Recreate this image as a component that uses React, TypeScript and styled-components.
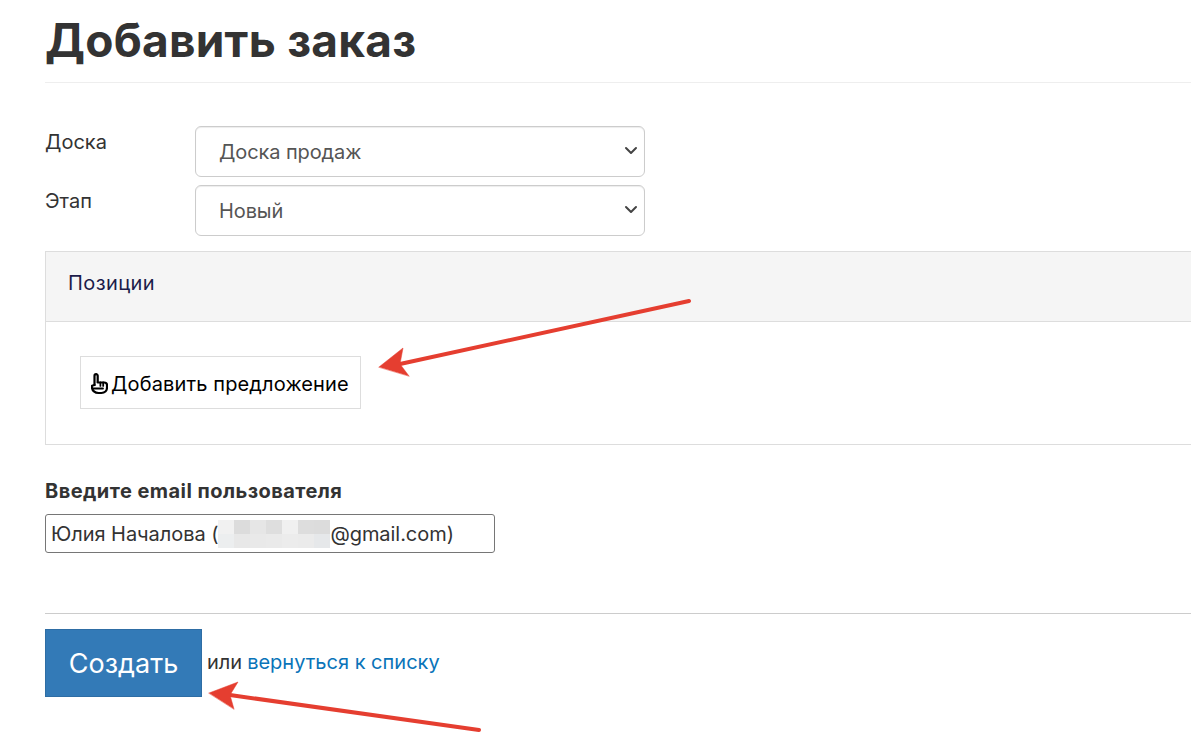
import React from "react";
import styled, { createGlobalStyle } from "styled-components";

const Global = createGlobalStyle`
  html, body { margin: 0; padding: 0; background: #fff; overflow: hidden; }
  body { font-family: Inter, "Noto Sans", sans-serif; color: #333; }
`;
const Page = styled.div`
  position: relative;
  width: 1191px;
  height: 748px;
  overflow: hidden;
  padding-left: 45px;
  box-sizing: border-box;
`;
const Content = styled.div`
  width: 1200px;
`;
const Header = styled.div`
  height: 82px;
  border-bottom: 1px solid #eee;
  box-sizing: content-box;
`;
const Title = styled.h1`
  margin: 0;
  font-size: 46px;
  line-height: 80px;
  font-weight: 700;
  color: #333;
  letter-spacing: 0.25px;
`;
const Form = styled.div`
  padding-top: 43px;
  display: flex;
  flex-direction: column;
  gap: 8px;
`;
const Row = styled.div`
  display: flex;
  align-items: flex-start;
`;
const RowLabel = styled.label`
  width: 150px;
  font-size: 20px;
  line-height: 33px;
  color: #333;
`;
const SelectWrap = styled.div`
  position: relative;
  width: 450px;
  height: 51px;
`;
const Select = styled.select`
  display: block;
  width: 100%;
  height: 100%;
  padding: 0 23px;
  appearance: none;
  font: 400 20px Inter, sans-serif;
  letter-spacing: -0.1px;
  color: #555;
  background: #fff;
  border: 1px solid #ccc;
  border-radius: 6px;
  box-shadow: inset 0 1px 1px rgba(0, 0, 0, 0.075);
`;
const Chevron = styled.svg`
  position: absolute;
  right: 7px;
  top: 20px;
  pointer-events: none;
`;
const Panel = styled.section`
  margin-top: 15px;
  border: 1px solid #ddd;
  height: 194px;
  box-sizing: border-box;
`;
const PanelHeading = styled.div`
  height: 70px;
  padding: 0 22px 8px;
  box-sizing: border-box;
  display: flex;
  align-items: center;
  background: #f5f5f5;
  border-bottom: 1px solid #ddd;
  font-size: 20px;
  letter-spacing: 0.4px;
  color: #1c1c4a;
`;
const PanelBody = styled.div`
  padding: 34px 34px;
`;
const OfferButton = styled.button`
  display: flex;
  align-items: center;
  gap: 3px;
  height: 53px;
  width: 281px;
  padding: 2px 0 0 10px;
  background: #fff;
  border: 1px solid #ddd;
  font: 400 20px Inter, sans-serif;
  letter-spacing: 0.14px;
  color: #000;
`;
const EmailLabel = styled.label`
  display: block;
  margin-top: 34px;
  font-size: 20px;
  line-height: 24px;
  font-weight: 700;
  letter-spacing: 0.45px;
  color: #333;
`;
const EmailInput = styled.div`
  margin-top: 11px;
  width: 450px;
  height: 39px;
  box-sizing: border-box;
  padding-left: 5px;
  display: flex;
  align-items: center;
  border: 1px solid #767676;
  border-radius: 3px;
  font-size: 20px;
  letter-spacing: -0.05px;
  color: #333;
  white-space: nowrap;
`;
const Redacted = styled.span`
  display: grid;
  grid-template-columns: repeat(7, 16px);
  grid-template-rows: repeat(2, 14px);
  flex: none;
`;
const Pixel = styled.i<{ $c: string }>`
  background: ${(p) => p.$c};
`;
const Divider = styled.hr`
  margin: 60px 0 15px;
  border: 0;
  border-top: 1px solid #ccc;
`;
const Actions = styled.div`
  display: flex;
  align-items: center;
  font-size: 20px;
  color: #333;
`;
const Submit = styled.button`
  width: 157px;
  height: 68px;
  padding: 0;
  margin-right: 5px;
  background: #337ab7;
  border: 1px solid #2e6da4;
  color: #fff;
  font: 400 27px Inter, sans-serif;
`;
const Aside = styled.span`
  padding-bottom: 2px;
`;
const BackLink = styled.a`
  margin-left: 5px;
  color: #0a74b9;
  text-decoration: none;
`;
const Arrows = styled.svg`
  position: absolute;
  left: 0;
  top: 0;
  pointer-events: none;
`;

const pixels = [
  "#f1f1f1", "#dcdcdc", "#e6e6e6", "#dedede", "#f0f0f0", "#dddddd", "#dcdcdc",
  "#eceeef", "#e8e8e8", "#e9e9e9", "#eaeaea", "#ececec", "#ebebeb", "#e6e8ea",
];

const HandIcon = () => (
  <svg width="17" height="22" viewBox="0 0 17 22" fill="none" stroke="#000" strokeWidth="2.2" strokeLinecap="round" strokeLinejoin="round">
    <path d="M3.5 12V2.8a1.6 1.6 0 0 1 3.2 0V9" />
    <path d="M6.7 9.5h6.6c1.6 0 2.7 1.1 2.7 2.6v2.4c0 3.3-2.4 5.5-5.6 5.5H7.5C4 20 1 17.6 1 14.2v-1.4L3.5 12" />
    <path d="M9.4 9.5v3.4M12.2 9.5v3.4" strokeWidth="1.8" />
    <path d="M2.5 15.5h9.5" strokeWidth="1.8" />
  </svg>
);

const SelectChevron = () => (
  <Chevron width="14" height="10" viewBox="0 0 14 10" fill="none" stroke="#444" strokeWidth="2" strokeLinecap="round" strokeLinejoin="round">
    <path d="M2 2l5 5 5-5" />
  </Chevron>
);

export default function App() {
  return (
    <Page>
      <Global />
      <Content>
        <Header>
          <Title>Добавить заказ</Title>
        </Header>
        <Form>
          <Row>
            <RowLabel>Доска</RowLabel>
            <SelectWrap>
              <Select defaultValue="sales">
                <option value="sales">Доска продаж</option>
              </Select>
              <SelectChevron />
            </SelectWrap>
          </Row>
          <Row>
            <RowLabel>Этап</RowLabel>
            <SelectWrap>
              <Select defaultValue="new">
                <option value="new">Новый</option>
              </Select>
              <SelectChevron />
            </SelectWrap>
          </Row>
        </Form>
        <Panel>
          <PanelHeading>Позиции</PanelHeading>
          <PanelBody>
            <OfferButton>
              <HandIcon />
              Добавить предложение
            </OfferButton>
          </PanelBody>
        </Panel>
        <EmailLabel>Введите email пользователя</EmailLabel>
        <EmailInput>
          Юлия Началова (
          <Redacted>
            {pixels.map((c, i) => (
              <Pixel key={i} $c={c} />
            ))}
          </Redacted>
          @gmail.com)
        </EmailInput>
        <Divider />
        <Actions>
          <Submit>Создать</Submit>
          <Aside>
            или
            <BackLink href="#">вернуться к списку</BackLink>
          </Aside>
        </Actions>
      </Content>
      <Arrows width="1191" height="748" viewBox="0 0 1191 748">
        <g fill="#e53e30" stroke="#e53e30" strokeLinecap="round">
          <path d="M689 301 L400 364" strokeWidth="4" fill="none" />
          <path d="M379 367 L403 348 L400 364 L409 376 Z" strokeWidth="0.5" />
          <path d="M479 730 L230 695" strokeWidth="4" fill="none" />
          <path d="M209 693 L238 682 L230 695 L234 709 Z" strokeWidth="0.5" />
        </g>
      </Arrows>
    </Page>
  );
}
